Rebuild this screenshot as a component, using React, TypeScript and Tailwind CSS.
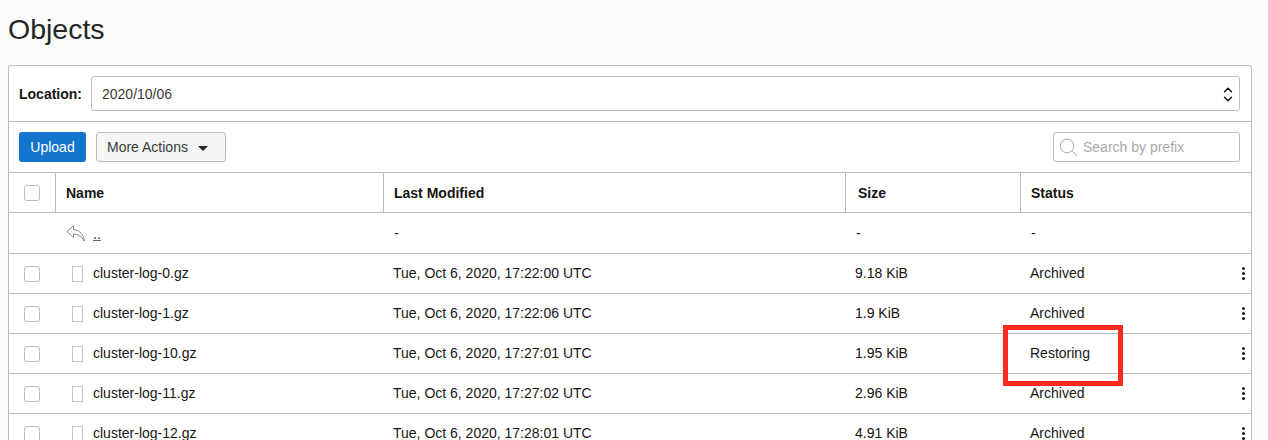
import { ChevronDown, ChevronUp } from "lucide-react";

const objects = [
  { name: "cluster-log-0.gz", modified: "Tue, Oct 6, 2020, 17:22:00 UTC", size: "9.18 KiB", status: "Archived" },
  { name: "cluster-log-1.gz", modified: "Tue, Oct 6, 2020, 17:22:06 UTC", size: "1.9 KiB", status: "Archived" },
  { name: "cluster-log-10.gz", modified: "Tue, Oct 6, 2020, 17:27:01 UTC", size: "1.95 KiB", status: "Restoring" },
  { name: "cluster-log-11.gz", modified: "Tue, Oct 6, 2020, 17:27:02 UTC", size: "2.96 KiB", status: "Archived" },
  { name: "cluster-log-12.gz", modified: "Tue, Oct 6, 2020, 17:28:01 UTC", size: "4.91 KiB", status: "Archived" },
];

const columns = "grid grid-cols-[47px_328px_462px_175px_1fr]";

function Checkbox() {
  return <span className="block size-[16px] rounded-[3px] border border-[#b8bcc4] bg-white" />;
}

function Kebab() {
  return (
    <span className="flex flex-col gap-[2px]">
      <span className="size-[3px] rounded-full bg-[#161513]" />
      <span className="size-[3px] rounded-full bg-[#161513]" />
      <span className="size-[3px] rounded-full bg-[#161513]" />
    </span>
  );
}

function FileIcon() {
  return <span className="block h-[16px] w-[11px] border border-[#c4c4c4] bg-white" />;
}

function BackIcon() {
  return (
    <svg width="19" height="17" viewBox="0 0 19 17" fill="none" stroke="#858585" strokeWidth="1" className="ml-[1px]">
      <path d="M7.5 0.8 L0.8 6.5 L7.5 12.5 L7.5 9.2 C12 9 15.5 11 18.2 16 C18 10 13.5 5 7.5 4.5 Z" />
    </svg>
  );
}

function HeaderCell({ label, indent = "pl-[10px]" }: { label: string; indent?: string }) {
  return (
    <div className={`flex items-center border-r border-[#b8bcc4] pt-[1px] font-bold last:border-r-0 ${indent}`}>
      {label}
    </div>
  );
}

export default function App() {
  return (
    <div className="h-[440px] overflow-hidden bg-[#fbfbfb] pl-[8px] pr-[16px] font-['Liberation_Sans',Arial,sans-serif] text-[14px] text-[#161513]">
      <h1 className="pt-[12px] text-[28.5px] leading-[34px] text-[#262626]">Objects</h1>

      <div className="mt-[19px] rounded-t-[3px] border border-b-0 border-[#b8bcc4] bg-white">
        <div className="flex h-[56px] items-center border-b border-[#b8bcc4] pl-[10px] pr-[10px]">
          <label className="mr-[10px] w-[62px] pt-[1px] font-bold">Location:</label>
          <div className="mr-[1px] flex h-[35px] flex-1 items-center justify-between rounded-[3px] border border-[#b8bcc4] pl-[10px] pr-[4px] pt-[1px] text-[#3a3a3a]">
            <span>2020/10/06</span>
            <span className="flex flex-col text-[#161513]">
              <ChevronUp size={14} strokeWidth={2.5} className="-mb-[2.5px]" />
              <ChevronDown size={14} strokeWidth={2.5} className="-mt-[2.5px]" />
            </span>
          </div>
        </div>

        <div className="flex h-[51px] items-center border-b border-[#b8bcc4] pl-[10px] pr-[11px]">
          <button type="button" className="h-[30px] w-[67px] rounded-[3px] bg-[#1375ce] pt-[1px] text-white">
            Upload
          </button>
          <button
            type="button"
            className="ml-[10px] flex h-[30px] w-[130px] items-center rounded-[3px] border border-[#b8bcc4] bg-[#f5f5f5] pl-[10px] pt-[1px] text-[#3a3a3a]"
          >
            More Actions
            <span className="ml-[10px] mt-[1px] border-x-[5.5px] border-t-[5px] border-x-transparent border-t-[#262626]" />
          </button>
          <div className="ml-auto flex h-[30px] w-[187px] items-center rounded-[3px] border border-[#b8bcc4] pl-[5px] pt-[1px] text-[#a9a9a9]">
            <svg width="19" height="19" viewBox="0 0 19 19" fill="none" stroke="#a9a9a9" strokeWidth="1" className="mr-[5px]">
              <circle cx="8" cy="8" r="6.8" />
              <path d="M13 13 L18 18" />
            </svg>
            Search by prefix
          </div>
        </div>

        <div className={`${columns} h-[40px] border-b border-[#b8bcc4]`}>
          <div className="flex items-center justify-center border-r border-[#b8bcc4] pr-[1px]">
            <Checkbox />
          </div>
          <HeaderCell label="Name" />
          <HeaderCell label="Last Modified" />
          <HeaderCell label="Size" indent="pl-[12px]" />
          <HeaderCell label="Status" />
        </div>

        <div className={`${columns} h-[41px] items-center border-b border-[#b8bcc4]`}>
          <div />
          <div className="flex items-center pl-[9px]">
            <BackIcon />
            <span className="ml-[8px] translate-y-[1px] underline decoration-[#666]">..</span>
          </div>
          <div className="pl-[10px]">-</div>
          <div className="pl-[10px]">-</div>
          <div className="pl-[10px]">-</div>
        </div>

        {objects.map((o) => (
          <div key={o.name} className={`${columns} h-[40px] items-center border-b border-[#b8bcc4]`}>
            <div className="flex justify-center pr-[1px]">
              <Checkbox />
            </div>
            <div className="flex items-center pl-[16px]">
              <FileIcon />
              <span className="ml-[10px]">{o.name}</span>
            </div>
            <div className="pl-[9px]">{o.modified}</div>
            <div className="pl-[9px]">{o.size}</div>
            <div className="relative flex items-center justify-between pl-[9px] pr-[6px]">
              <span>{o.status}</span>
              <Kebab />
              {o.status === "Restoring" && (
                <span className="absolute left-[-18px] top-[-18px] h-[61px] w-[120px] border-[5px] border-[#fb2c1f]" />
              )}
            </div>
          </div>
        ))}
      </div>
    </div>
  );
}
